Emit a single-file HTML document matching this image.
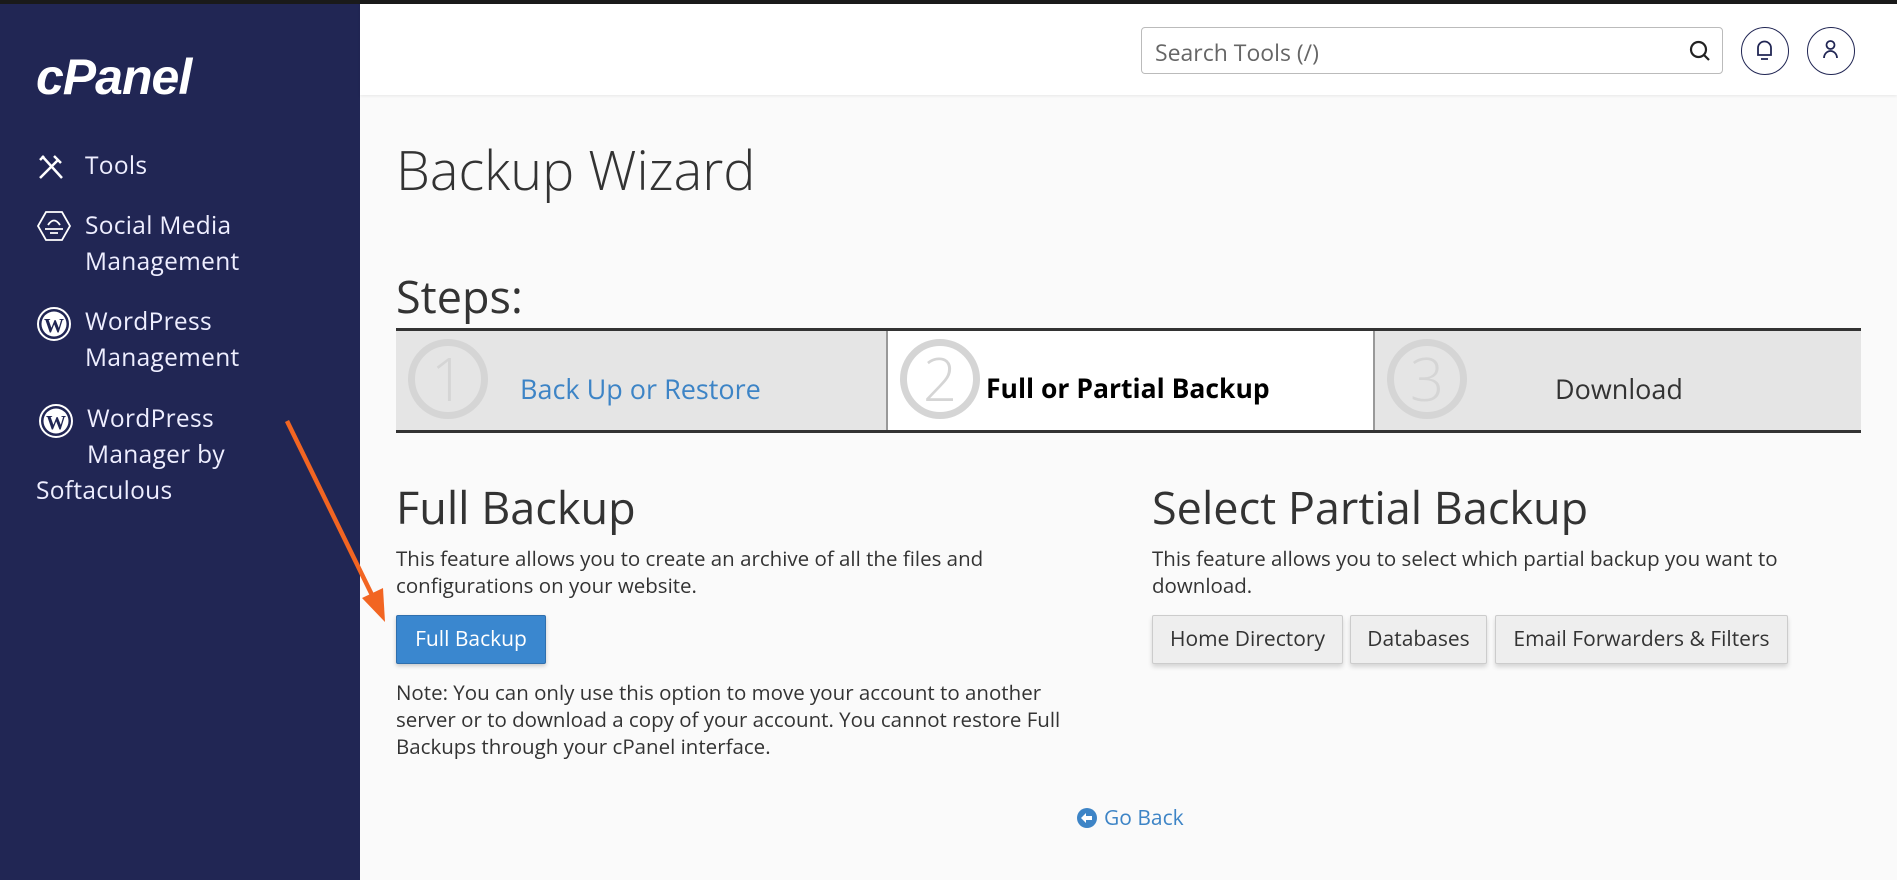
<!DOCTYPE html>
<html><head><meta charset="utf-8"><style>
*{box-sizing:border-box;margin:0;padding:0}
body{width:1897px;height:880px;overflow:hidden;background:#fafafa;font-family:"Open Sans","Liberation Sans",sans-serif;position:relative;color:#333}
.topstrip{position:absolute;left:0;top:0;width:1897px;height:4px;background:#1a1a1a}
.side{position:absolute;left:0;top:4px;width:360px;height:876px;background:#212654;color:#fff}
.logo{position:absolute;left:36px;top:44px;font:italic bold 50px "Liberation Sans",sans-serif;letter-spacing:-1px}
.nav{position:absolute;left:85px;font-size:24.5px;line-height:36px;color:#eef;letter-spacing:.3px}
.ico{position:absolute;left:36px}
.top{position:absolute;left:360px;top:4px;width:1537px;height:91px;background:#fff;box-shadow:0 1px 3px rgba(0,0,0,.08)}
.search{position:absolute;left:1141px;top:27px;width:582px;height:47px;border:1px solid #bbb;border-radius:4px;background:#fff;font-size:23px;color:#666;padding:8px 13px}
.circ{position:absolute;top:27px;width:48px;height:48px;border:1.5px solid #212654;border-radius:50%}
h1{position:absolute;left:396px;top:132px;font-weight:300;font-size:54px;color:#333}
.steps-h{position:absolute;left:396px;top:266px;font-size:45px;color:#333}
.steps{position:absolute;left:396px;top:328px;width:1465px;height:105px;border-top:3px solid #333;border-bottom:3px solid #333;background:#e5e5e5}
.st{position:absolute;top:0;height:99px}
.num{position:absolute;top:8px;left:12px;width:80px;height:80px;border:7px solid #d5d5d5;border-radius:50%;font-size:60px;color:#d5d5d5;text-align:center;line-height:64px;font-weight:300}
.lbl{position:absolute;top:39px;font-size:27px}
h2{position:absolute;font-weight:400;font-size:45px;color:#333}
.p{position:absolute;font-size:20.5px;line-height:27px;color:#333}
.btn{position:absolute;top:615px;height:49px;font-size:21px;line-height:47px;text-align:center;border-radius:2px}
.g{background:#eee;border:1px solid #ccc;box-shadow:0 3px 5px rgba(0,0,0,.15);color:#333}
</style></head><body>
<div class="topstrip"></div>
<div class="side">
<div class="logo">cPanel</div>
<svg class="ico" style="top:148px" width="30" height="30" viewBox="0 0 30 30" fill="none" stroke="#fff" stroke-width="2.5"><path d="M4 26 L22 8 M18 4 l7 7 M6 4 l20 22 M4 8 l4 -4"/></svg>
<div class="nav" style="top:144px">Tools</div>
<svg class="ico" style="top:206px" width="36" height="32" viewBox="0 0 36 32" fill="none" stroke="#fff" stroke-width="1.8"><path d="M10 2 H26 L34 16 L26 30 H10 L2 16 Z M12 15 Q18 6 24 15 M9 19 H27 M14 23 H22"/></svg>
<div class="nav" style="top:204px">Social Media<br>Management</div>
<svg class="ico" style="top:302px" width="36" height="36" viewBox="0 0 36 36"><circle cx="18" cy="18" r="16" fill="none" stroke="#fff" stroke-width="2"/><circle cx="18" cy="18" r="12.5" fill="#fff"/><text x="18" y="26" font-size="20" font-weight="bold" text-anchor="middle" fill="#212654" font-family="Liberation Serif">W</text></svg>
<div class="nav" style="top:300px">WordPress<br>Management</div>
<svg class="ico" style="top:399px;left:38px" width="36" height="36" viewBox="0 0 36 36"><circle cx="18" cy="18" r="16" fill="none" stroke="#fff" stroke-width="2"/><circle cx="18" cy="18" r="12.5" fill="#fff"/><text x="18" y="26" font-size="20" font-weight="bold" text-anchor="middle" fill="#212654" font-family="Liberation Serif">W</text></svg>
<div class="nav" style="top:397px;left:87px">WordPress<br>Manager by</div>
<div class="nav" style="top:469px;left:36px">Softaculous</div>
</div>
<div class="top"></div>
<div class="search">Search Tools (/)
<svg style="position:absolute;right:10px;top:11px" width="24" height="24" viewBox="0 0 24 24" fill="none" stroke="#222" stroke-width="2.2"><circle cx="10.5" cy="10.5" r="7.5"/><path d="M16 16 L21 21"/></svg></div>
<div class="circ" style="left:1741px"><svg width="45" height="45" viewBox="0 0 45 45" fill="none" stroke="#212654" stroke-width="1.8"><path d="M16 27 V20 a6.5 6.5 0 0 1 13 0 V27 Z M19 31 H26"/></svg></div>
<div class="circ" style="left:1807px"><svg width="45" height="45" viewBox="0 0 45 45" fill="none" stroke="#212654" stroke-width="1.8"><circle cx="22.5" cy="17" r="4"/><path d="M16 30 a6.5 7 0 0 1 13 0"/></svg></div>
<h1>Backup Wizard</h1>
<div class="steps-h">Steps:</div>
<div class="steps">
<div class="st" style="left:0;width:490px"><div class="num">1</div><div class="lbl" style="left:124px;color:#3d84c6">Back Up or Restore</div></div>
<div class="st" style="left:490px;width:489px;background:#fff;border-left:2px solid #999;border-right:2px solid #999"><div class="num">2</div><div class="lbl" style="left:98px;color:#000;font-weight:bold;font-size:26.5px">Full or Partial Backup</div></div>
<div class="st" style="left:979px;width:486px"><div class="num">3</div><div class="lbl" style="left:180px">Download</div></div>
</div>
<h2 style="left:396px;top:477px">Full Backup</h2>
<h2 style="left:1152px;top:477px">Select Partial Backup</h2>
<div class="p" style="left:396px;top:546px">This feature allows you to create an archive of all the files and<br>configurations on your website.</div>
<div class="p" style="left:1152px;top:546px">This feature allows you to select which partial backup you want to<br>download.</div>
<div class="btn" style="left:396px;width:150px;background:#3a87cf;color:#fff;border:1px solid #2f6fad;box-shadow:0 2px 4px rgba(0,0,0,.2)">Full Backup</div>
<div class="btn g" style="left:1152px;width:191px">Home Directory</div>
<div class="btn g" style="left:1350px;width:137px">Databases</div>
<div class="btn g" style="left:1495px;width:293px">Email Forwarders &amp; Filters</div>
<div class="p" style="left:396px;top:680px">Note: You can only use this option to move your account to another<br>server or to download a copy of your account. You cannot restore Full<br>Backups through your cPanel interface.</div>
<div style="position:absolute;left:1076px;top:804px;font-size:21px;color:#3d84c6;display:flex;align-items:center;gap:6px"><svg width="22" height="22" viewBox="0 0 22 22"><circle cx="11" cy="11" r="10" fill="#3d84c6"/><path d="M5 11 L10 6 V9 H16 V13 H10 V16 Z" fill="#fff"/></svg>Go Back</div>
<svg style="position:absolute;left:0;top:0" width="1897" height="880"><path d="M287 421 L372 595" stroke="#f26522" stroke-width="4.5"/><path d="M385 622 L362 598 L383 588 Z" fill="#f26522"/></svg>
</body></html>
